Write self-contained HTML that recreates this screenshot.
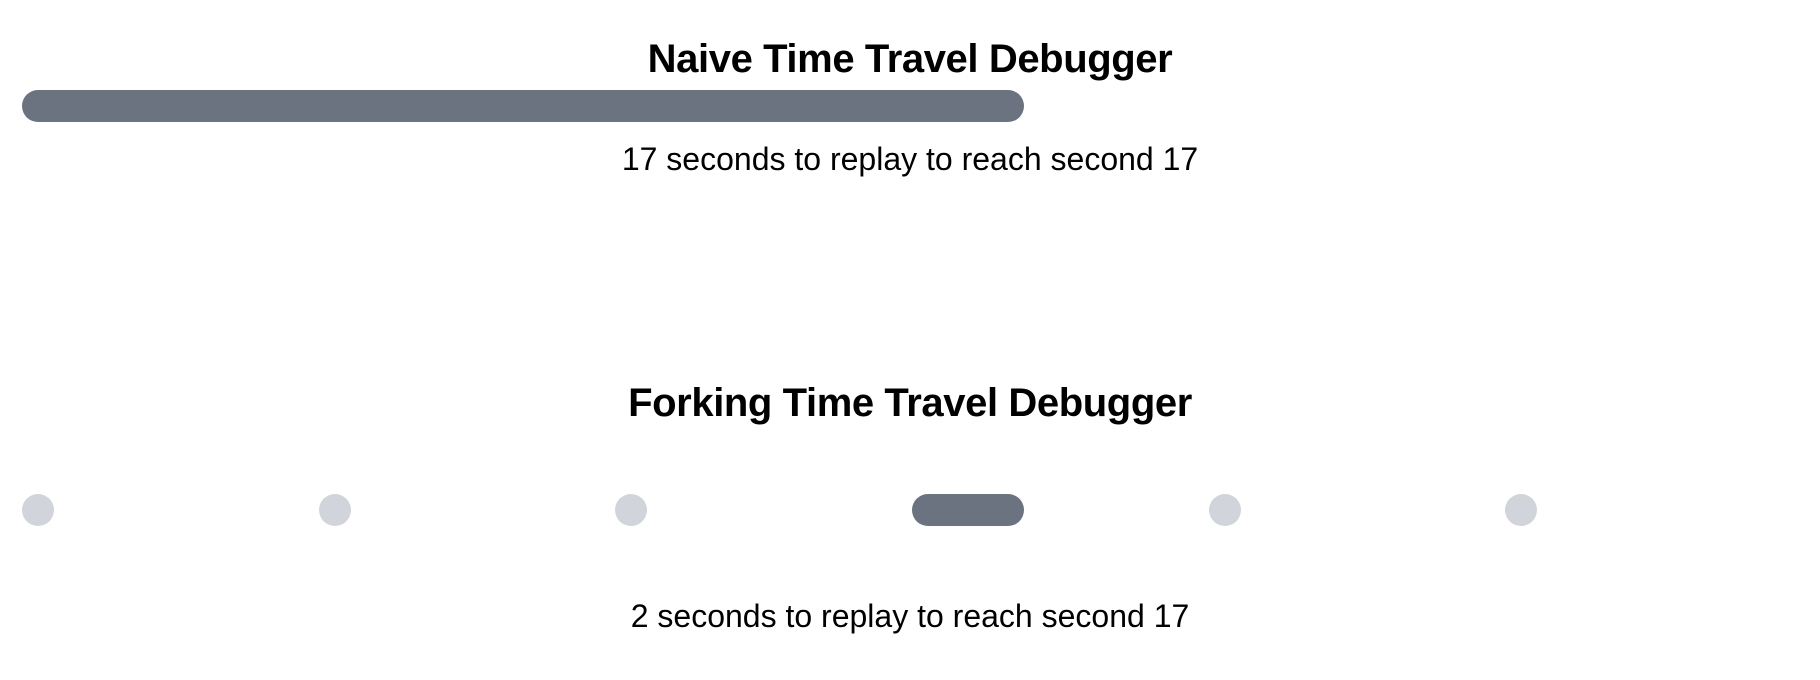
<!DOCTYPE html>
<html><head><style>
html,body{margin:0;padding:0;background:#fff;width:1820px;height:680px;overflow:hidden;font-family:"Liberation Sans",sans-serif;color:#000}
.t{position:absolute;left:0;width:1820px;text-align:center;font-weight:bold;font-size:40px;letter-spacing:-0.4px}
.s{position:absolute;left:0;width:1820px;text-align:center;font-size:32px}
.b{position:absolute;background:#6b7280;border-radius:16px}
.d{position:absolute;width:32px;height:32px;border-radius:50%;background:#d1d5db;top:494px}
</style></head><body>
<div class="t" style="top:37px">Naive Time Travel Debugger</div>
<div class="b" style="left:22px;top:90px;width:1002px;height:32px"></div>
<div class="s" style="top:141px">17 seconds to replay to reach second 17</div>
<div class="t" style="top:381px">Forking Time Travel Debugger</div>
<div class="d" style="left:22px"></div>
<div class="d" style="left:319px"></div>
<div class="d" style="left:615px"></div>
<div class="b" style="left:912px;top:494px;width:112px;height:32px"></div>
<div class="d" style="left:1209px"></div>
<div class="d" style="left:1505px"></div>
<div class="s" style="top:598px">2 seconds to replay to reach second 17</div>
</body></html>
